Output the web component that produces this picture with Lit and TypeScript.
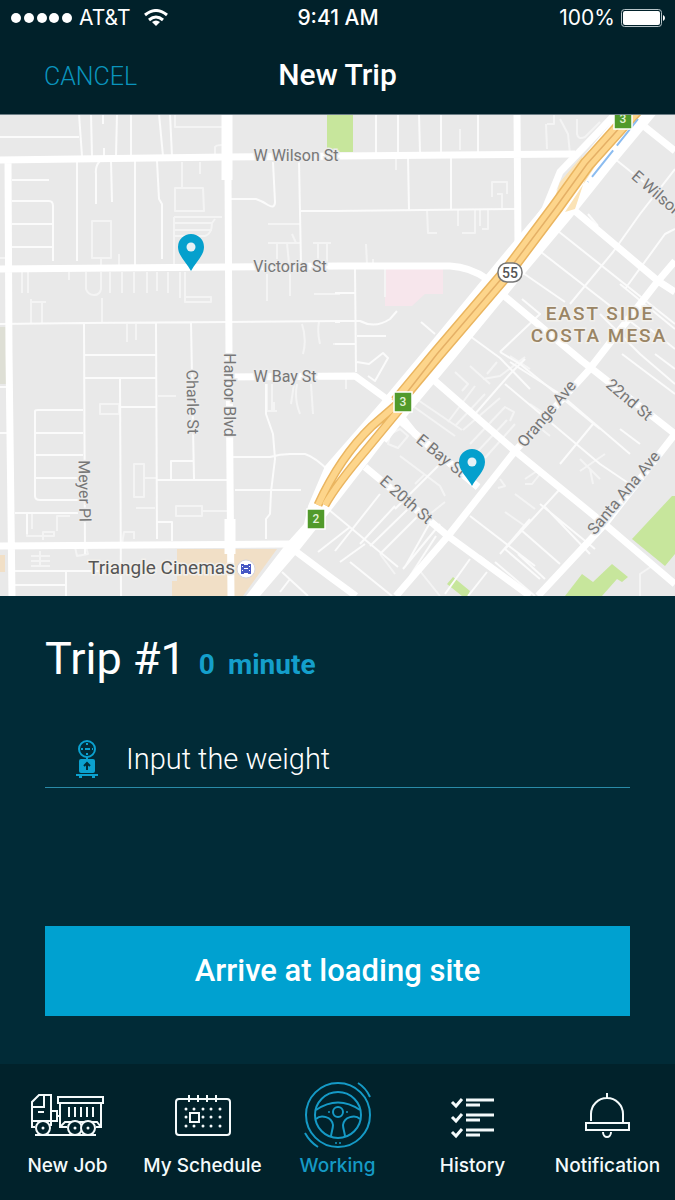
import { LitElement, html, svg, css } from "lit";
import { customElement, property } from "lit/decorators.js";
import { classMap } from "lit/directives/class-map.js";

const pin = (x: number, y: number) => svg`
  <g transform="translate(${x} ${y})">
    <path class="pin" d="M0 0C-4 -8 -13 -15 -13 -24A13 13 0 0 1 13 -24C13 -15 4 -8 0 0Z" />
    <circle class="pin-hole" cx="0" cy="-24" r="4.5" />
  </g>`;

const exitSign = (x: number, y: number, n: string) => svg`
  <g transform="translate(${x} ${y})">
    <rect class="exit" x="-9" y="-10" width="18" height="20" />
    <text class="exit-text" y="4">${n}</text>
  </g>`;

const street = (x: number, y: number, angle: number, name: string) => svg`
  <text class="street" transform="translate(${x} ${y}) rotate(${angle})" y="5">${name}</text>`;

@customElement("trip-map")
export class TripMap extends LitElement {
  static styles = css`
    :host {
      display: block;
      border-top: 1px solid #6d7f87;
      background: #e9e9e9;
    }
    svg {
      display: block;
      width: 100%;
      height: auto;
    }
    text {
      font-family: Roboto, "Liberation Sans", sans-serif;
      text-anchor: middle;
    }
    .road, .lane, .alley {
      fill: none;
      stroke: #fff;
      stroke-linejoin: round;
    }
    .road { stroke-width: 7; }
    .lane { stroke-width: 2; stroke: #fbfbfb; }
    .alley { stroke-width: 2; stroke: #f4f4f4; }
    .wide { stroke-width: 11; }
    .casing { fill: none; stroke: #fff; stroke-width: 29; }
    .casing-end { fill: #fff; }
    .highway { fill: none; stroke: #eab560; stroke-width: 15; }
    .highway-fill { fill: none; stroke: #fdd58b; stroke-width: 12; }
    .highway-line { fill: none; stroke: #e5b066; stroke-width: 1.5; }
    .split { stroke-width: 9; }
    .split-fill { stroke-width: 6; }
    .ramp { fill: #fbe3b6; }
    .rail { fill: none; stroke: #8bbcf0; stroke-width: 2; stroke-dasharray: 34 6; }
    .park { fill: #c7e69c; }
    .hospital { fill: #f7e6ec; }
    .mall { fill: #f1dfc6; }
    .lot { fill: #dedfd5; }
    .street {
      font-size: 16px;
      fill: #777;
      stroke: #ebebeb;
      stroke-width: 3;
      paint-order: stroke;
    }
    .area {
      font-size: 19px;
      font-weight: 500;
      letter-spacing: 2px;
      fill: #9a8565;
      stroke: #f2f0ec;
      stroke-width: 3;
      paint-order: stroke;
    }
    .place {
      font-size: 19px;
      fill: #555;
      stroke: #f2f0ec;
      stroke-width: 3;
      paint-order: stroke;
      text-anchor: start;
    }
    .exit { fill: #519a2b; stroke: #fff; stroke-width: 1.5; }
    .exit-text { font-size: 12px; font-weight: 500; fill: #e3f2d9; }
    .shield { fill: #fff; stroke: #777; stroke-width: 1.5; }
    .shield-text { font-size: 14px; font-weight: 500; fill: #555; }
    .poi { fill: #fff; stroke: #d5d5dc; }
    .poi-film { fill: #4758c4; }
    .poi-hole { fill: #fff; }
    .pin { fill: #05a0cd; }
    .pin-hole { fill: #e6f1f5; }
  `;

  render() {
    return html`
      <svg viewBox="0 1 675 481" role="img" aria-label="Map of Costa Mesa">
        <path class="park" d="M327 0H353V38H327ZM632 425L672 382H675V440L665 452ZM565 482L582 460L593 468L612 450L628 463L622 468L617 465L602 482ZM453 463L470 477L468 482H462L447 470Z" />
        <path class="hospital" d="M385 155H443V180H425L412 192H385Z" />
        <path class="mall" d="M177 435H277L243 482H172V467H177ZM0 441H5V458H0Z" />
        <path class="lot" d="M0 213H6V270H0Z" />

        <path class="alley" d="M0 144H8M175 0V13H222M215 42V33Q216 31 222 31M175 74H203L204 97H175ZM182 48V74M200 48V60M174 103H222M174 109H212L215 105M174 116H212M174 122H205Q212 120 212 109M174 103V150M92 107H111V144H92ZM101 144V155M119 140V155" />
        <path class="alley" d="M22 158V179M28 158V179M69 158V166M86 158V175Q88 181 94 181Q100 181 101 175V158M110 158V179M122 158V179M134 158V179M147 158V179M157 158V177M168 158V179M180 158V184M185 158V188M185 183H211V188H185ZM30 188H46M31 185V210M42 188V210M102 184V208M127 210V228M136 210V226" />
        <path class="alley" d="M268 110H300M268 129H301M277 129V145M287 129L290 160V182M292 120L296 129M267 160V187M313 129H331M318 129V150M327 129V150M314 180H340M302 210Q307 225 303 240M319 208Q317 218 320 230M333 230H340" />
        <path class="alley" d="M492 83V68H507V80M497 80H502V94M427 96L428 119H437M458 96V112M475 96V119H462M480 96V112M488 96V115H482M396 44V56M366 130L367 150M373 145V152M385 152V183M546 10L547 35M547 10H554V0M560 5L568 20L570 40M577 5V20Q578 26 585 23L600 8M460 15V36" />
        <path class="alley" d="M100 290H119V300H100ZM158 282H176M134 350H144V383H134ZM144 364H157M136 394H155M176 392H202V402H176ZM202 397H228M27 400V422H54V418H43V426M32 400V415M57 417V402H70M122 430L124 418H134V425M75 433L77 442L88 440L86 433M31 442H50M31 447H50M31 452H50M40 437V452" />
        <path class="alley" d="M267 270V297H277M272 270V297M274 288V297M294 270L291 290M297 270Q294 285 300 300M311 270L313 300M346 262V275M390 320L400 315L408 322L398 334L388 330ZM410 290L455 322M415 284L462 316M448 308L475 272M455 312L485 280M463 316L500 284M470 330L505 293L514 298L510 307M478 337L507 306M485 344L515 310" />
        <path class="alley" d="M455 258L468 270L462 277M470 252L490 270M483 265L500 262L525 243M487 260L497 248M510 242L530 255M530 290L545 300M535 310L550 322M525 370H532L540 360M500 365L505 372L498 374M540 355L525 365M580 357L605 340M590 355L593 370M580 345L600 365M400 342L440 372L445 382M415 370L425 360M445 388L430 400M505 398L525 412M515 380L535 395M640 482V460L655 450M420 457L440 482M380 440L395 460" />

        <path class="lane" d="M0 23H79M79 0L82 42M91 0L92 42M117 0L116 42M131 0V42M159 0L163 42M170 0L172 42M103 0V10M104 34V42M12 66H49M12 87H49Q53 87 53 92V147M12 110H53M12 133H53M77 47V147M100 47Q95 52 96 60V90M111 47L112 88M135 47V152M157 47L159 85L162 90V145M231 85H256Q262 87 268 91Q275 95 275 88L273 48M299 47L301 150M301 97H340" />
        <path class="lane" d="M0 210L83 209L228 208L340 207M84 209L85 440M156 209L157 425M191 209L194 365M84 241H156M84 264H156M120 264L121 482M120 293H156M0 273H11M0 319H11M35 297Q35 296 38 296H83M35 297V382Q35 386 40 386H80M35 319H83M35 341H83M35 364H83M15 399H78M157 366H228M171 366V347H193M157 408H172V427M15 457H120M15 471H66M66 457V482M27 400V420" />
        <path class="lane" d="M232 343H270Q280 340 290 340H305Q315 343 330 358M235 376H301M266 270V300L273 320L275 345L271 378L270 400L266 405V425" />
        <path class="lane" d="M376 0V40M398 0V38M419 0L420 38M441 0V38M478 0V38M408 43L409 96M451 43V96M335 97L517 95M335 208H340M355 155L356 258M335 179H355M335 207H360Q375 215 390 205L397 197M357 222H386M335 230H355M421 208L435 220M357 248L369 250L383 239L388 244L375 267L368 262M340 230H355" />
        <path class="lane" d="M615 45L675 93M558 117L675 210M541 138L640 215M523 159L565 188M463 217L500 244L530 275M675 55L640 100L613 138L570 190M675 115L665 120L625 175M675 235L650 215M600 200L640 240L675 270M620 170L675 215M500 238L540 200L522 185M500 238L520 250M510 248L560 280M588 100L598 112M525 245L510 260L475 300M622 240L675 280M655 240L675 255" />
        <path class="lane" d="M505 270L600 350L637 375M560 280L630 340M520 250L600 315M593 310L560 350M560 375L505 435M545 393L590 440M520 415L560 450M530 405L500 440M518 440L545 465M540 390L595 435M640 330L620 315M470 402L535 452M505 435L540 465M495 448L535 482" />
        <path class="lane" d="M328 395L398 453M350 413L318 438M380 380L335 437M395 392L360 430M408 395L370 432M418 402L380 440M432 405L405 453M395 395L440 350M340 448L365 430M403 455L440 410M436 422L410 462M470 445L445 480M487 458L468 482M282 458L308 482M290 465L280 478M350 448L392 482M480 442L530 482" />

        <path class="road" d="M8 45L9 240L12 482M0 46L227 43L340 42L575 40M0 155L340 152H450Q470 153 487 165M228 263L355 262L388 286L415 320L478 373M0 432L290 430M517 0L518 130" />
        <path class="road" d="M398 305L478 373M365 353L448 422L530 482M290 433L330 463L356 482M396 482L448 422L515 337L588 257L658 167L675 147M435 267L515 337L608 413L675 470M502 180L582 247L675 320M575 97L658 167L675 178M645 13L675 37M538 482L605 410L675 320" />
        <path class="road wide" d="M227 0V66" />
        <path class="road" d="M228 60L229 240L231 482" />
        <path class="road wide" d="M230 405V440" />

        <path class="casing" d="M650 -15L600 45L560 95L508 157L444 235L398 290L375 320" />
        <path class="casing-end" d="M388 280L325 352L308 392L304 410L286 430L246 482H260L297 439L332 395L363 355L405 300Z" />
        <path class="road" d="M620 -5L585 32L560 58L545 95L525 123" />
        <path class="ramp" d="M582 42L560 68L550 98L580 70ZM590 50L575 95L565 98L600 45Z" />
        <path class="highway split" d="M402 286L372 312Q340 343 318 391M404 290L366 336Q337 370 325 391" />
        <path class="highway-fill split-fill" d="M402 286L372 312Q340 343 318 391M404 290L366 336Q337 370 325 391" />
        <path class="highway" d="M640 -9L587 50L556 93L508 157L437 240L397 288" />
        <path class="highway-fill" d="M640 -9L587 50L556 93L508 157L437 240L396 289" />
        <path class="highway-line" d="M640 -9L587 50L556 93L508 157L437 240L398 290" />
        <path class="rail" d="M638 5L588 68" />

        ${street(296, 42, 0, "W Wilson St")}
        ${street(290, 153, 0, "Victoria St")}
        ${street(285, 263, 0, "W Bay St")}
        ${street(192, 288, 89, "Charle St")}
        ${street(229, 281, 90, "Harbor Blvd")}
        ${street(84, 377, 89, "Meyer Pl")}
        ${street(657, 80, 41, "E Wilson")}
        ${street(547, 300, -50, "Orange Ave")}
        ${street(629, 286, 40, "22nd St")}
        ${street(624, 379, -50, "Santa Ana Ave")}
        ${street(441, 342, 39, "E Bay St")}
        ${street(406, 386, 41, "E 20th St")}

        <text class="area" x="600" y="206">EAST SIDE</text>
        <text class="area" x="599" y="228">COSTA MESA</text>

        <text class="place" x="88" y="460">Triangle Cinemas</text>
        <circle class="poi" cx="246" cy="455" r="9" />
        <path class="poi-film" d="M241 450H244V451H248V450H251V460H248V459H244V460H241Z" />
        <path class="poi-hole" d="M242 452H243V453H242ZM242 456H243V457H242ZM249 452H250V453H249ZM249 456H250V457H249ZM244 454H248V455H244Z" />

        <rect class="shield" x="498" y="149" width="24" height="19" rx="9" />
        <text class="shield-text" x="510" y="164">55</text>
        ${exitSign(403, 288, "3")}
        ${exitSign(316, 405, "2")}
        ${exitSign(623, 5, "3")}
        ${pin(191, 157)}
        ${pin(472, 372)}
      </svg>
    `;
  }
}

const dots = (xs: number[], ys: number[]) =>
  ys.map((y) => xs.map((x) => svg`<circle class="solid" cx="${x}" cy="${y}" r="1.5" />`));

const icons = {
  truck: svg`
    <path d="M6 47H3V22L10 15H22V46M3 27H15V15M9 32H15M3 41H22M22 31H28V41H22M28 36H31" />
    <path d="M29 17H74V23H29ZM31 23V47H38M72 23V47H67M31 47L36 42H68L72 47M40 27V37M46 27V37M52 27V37M58 27V37M64 27V37M6 55H67" />
    <circle class="wheel" cx="14" cy="48" r="7" />
    <circle class="wheel" cx="46" cy="48" r="7" />
    <circle class="wheel" cx="59" cy="48" r="7" />
    ${dots([14, 46, 59], [48])}`,
  calendar: svg`
    <rect x="12" y="19" width="54" height="36" rx="3" />
    <path d="M25 15V22M34 15V22M43 15V22M52 15V22" />
    ${dots([22, 30, 39, 47, 56], [29, 46])}
    ${dots([22, 39, 47, 56], [37])}
    <rect x="26" y="33" width="9" height="9" />`,
  steering: svg`
    <circle cx="39" cy="35" r="32" />
    <circle cx="39" cy="35" r="23" />
    <circle cx="39" cy="32" r="5" />
    <path d="M17 30Q39 15 61 30M17 39C22 34 33 37 34 45C34 49 32 53 32 57M61 39C56 34 45 37 44 45C44 49 46 53 46 57M59 3Q67 8 71 17M6 53Q11 62 19 67" />
    <circle class="solid" cx="30" cy="32" r="1" />
    <circle class="solid" cx="48" cy="32" r="1" />
    <circle class="solid" cx="37" cy="63" r="1" />
    <circle class="solid" cx="41" cy="63" r="1" />`,
  list: svg`
    <path class="heavy" d="M32 20H60M32 25H46M32 35H60M32 40H46M32 50H60M32 55H46" />
    <path class="heavy" d="M18 22L22 26L28 19M18 37L22 41L28 34M18 52L22 56L28 49" />`,
  bell: svg`
    <path d="M38 13V18M22 41V34A16 16 0 0 1 54 34V42M34 52A4 5 0 0 0 42 52" />
    <rect x="17" y="43" width="43" height="7" />`,
};

@customElement("tab-item")
export class TabItem extends LitElement {
  @property() label = "";
  @property() icon: keyof typeof icons = "truck";
  @property({ type: Boolean }) active = false;

  static styles = css`
    :host {
      display: block;
      flex: 1 1 0;
      min-width: 0;
    }
    a {
      display: flex;
      flex-direction: column;
      align-items: center;
      gap: 4px;
      color: #f4fafb;
      text-decoration: none;
      white-space: nowrap;
      font: 500 19px/24px Inter, "Liberation Sans", sans-serif;
    }
    a.active {
      color: #159ac6;
    }
    svg {
      width: 76px;
      height: 70px;
      fill: none;
      stroke: currentColor;
      stroke-width: 2;
    }
    .solid {
      fill: currentColor;
      stroke: none;
    }
    .wheel {
      fill: #01222b;
    }
    .heavy {
      stroke-width: 3;
    }
  `;

  render() {
    return html`
      <a href="#" class=${classMap({ active: this.active })}>
        <svg viewBox="1 0 76 70" aria-hidden="true">${icons[this.icon]}</svg>
        <span>${this.label}</span>
      </a>
    `;
  }
}

@customElement("app-root")
export class AppRoot extends LitElement {
  static styles = css`
    :host {
      display: flex;
      flex-direction: column;
      min-height: 100vh;
      background: #012b37;
      color: #fff;
      font-family: Roboto, "Liberation Sans", sans-serif;
    }
    .top {
      background: #01212a;
    }
    .status {
      display: grid;
      grid-template-columns: 1fr auto 1fr;
      align-items: center;
      height: 36px;
      padding: 0 10px 0 11px;
      font: 400 21px/24px Inter, "Liberation Sans", sans-serif;
    }
    .carrier, .battery {
      display: flex;
      align-items: center;
      gap: 6px;
    }
    .carrier svg:last-child {
      margin-left: 2px;
    }
    .battery {
      justify-content: flex-end;
    }
    .clock {
      font-weight: 500;
    }
    .bar {
      display: grid;
      grid-template-columns: 1fr auto 1fr;
      align-items: center;
      height: 78px;
      padding: 0 44px;
    }
    .cancel {
      justify-self: start;
      padding: 3px 0 0;
      border: 0;
      background: none;
      color: #0a94bd;
      font: 300 25px/30px Roboto, "Liberation Sans", sans-serif;
    }
    h1 {
      margin: 0;
      font-size: 30px;
      line-height: 36px;
      font-weight: 500;
    }
    .trip {
      flex: 1;
      display: flex;
      flex-direction: column;
      padding: 36px 45px 48px;
    }
    .heading {
      display: flex;
      align-items: baseline;
      gap: 13px;
    }
    h2 {
      margin: 0;
      font-size: 45px;
      line-height: 54px;
      font-weight: 400;
    }
    .time {
      color: #149fcb;
      font-size: 28px;
      font-weight: 700;
    }
    .field {
      display: flex;
      align-items: center;
      gap: 27px;
      height: 56px;
      margin-top: 45px;
      padding-left: 30px;
      border-bottom: 1px solid #2a8ba8;
    }
    .field svg {
      flex: none;
      color: #0ba1cf;
    }
    input {
      flex: 1;
      min-width: 0;
      padding: 0;
      border: 0;
      outline: 0;
      background: none;
      color: #fff;
      font: 300 29px/36px Roboto, "Liberation Sans", sans-serif;
    }
    input::placeholder {
      color: #fff;
      opacity: 1;
    }
    .primary {
      height: 90px;
      margin-top: auto;
      border: 0;
      background: #00a1d0;
      color: #fff;
      font: 500 31px/36px Roboto, "Liberation Sans", sans-serif;
    }
    .tabs {
      display: flex;
      height: 120px;
      padding-top: 16px;
      background: #01222b;
    }
  `;

  render() {
    return html`
      <header class="top">
        <div class="status">
          <div class="carrier">
            <svg width="62" height="12" fill="#fff" aria-hidden="true">
              ${[5, 18, 31, 43, 56].map((x) => svg`<circle cx="${x}" cy="6" r="5" />`)}
            </svg>
            <span>AT&amp;T</span>
            <svg width="36" height="18" viewBox="0 0 36 18" fill="none" stroke="#fff" stroke-width="3" aria-hidden="true">
              <path d="M7 6Q18 -3 29 6M11 11Q18 5 25 11" />
              <path fill="#fff" stroke="none" d="M14 13Q18 10 22 13L18 17Z" />
            </svg>
          </div>
          <span class="clock">9:41 AM</span>
          <div class="battery">
            <span>100%</span>
            <svg width="44" height="18" viewBox="0 0 44 18" aria-hidden="true">
              <rect x="0.5" y="0.5" width="40" height="17" rx="3" fill="none" stroke="#b7c4c8" />
              <rect x="2" y="2" width="37" height="14" rx="2" fill="#fff" />
              <path d="M42 6Q44 7 44 9Q44 11 42 12Z" fill="#fff" />
            </svg>
          </div>
        </div>
        <div class="bar">
          <button class="cancel" type="button">CANCEL</button>
          <h1>New Trip</h1>
        </div>
      </header>

      <trip-map></trip-map>

      <main class="trip">
        <div class="heading">
          <h2>Trip #1</h2>
          <span class="time">0</span>
          <span class="time">minute</span>
        </div>
        <label class="field">
          <svg width="24" height="38" viewBox="0 0 24 38" fill="none" stroke="currentColor" stroke-width="2" aria-hidden="true">
            <circle cx="12" cy="9" r="8" />
            <path d="M12 3V5M12 13V15M6 9H8M10 9H15M17 9H18" />
            <rect x="4" y="19" width="16" height="14" rx="2" fill="currentColor" stroke="none" />
            <path d="M1 35H23M4 37H7M17 37H20M12 17V19" />
            <path stroke="#012b37" d="M12 23V30M9 26L12 23L15 26" />
          </svg>
          <input type="text" inputmode="decimal" aria-label="Weight" placeholder="Input the weight" />
        </label>
        <button class="primary" type="button">Arrive at loading site</button>
      </main>

      <nav class="tabs">
        <tab-item label="New Job" icon="truck"></tab-item>
        <tab-item label="My Schedule" icon="calendar"></tab-item>
        <tab-item label="Working" icon="steering" active></tab-item>
        <tab-item label="History" icon="list"></tab-item>
        <tab-item label="Notification" icon="bell"></tab-item>
      </nav>
    `;
  }
}
